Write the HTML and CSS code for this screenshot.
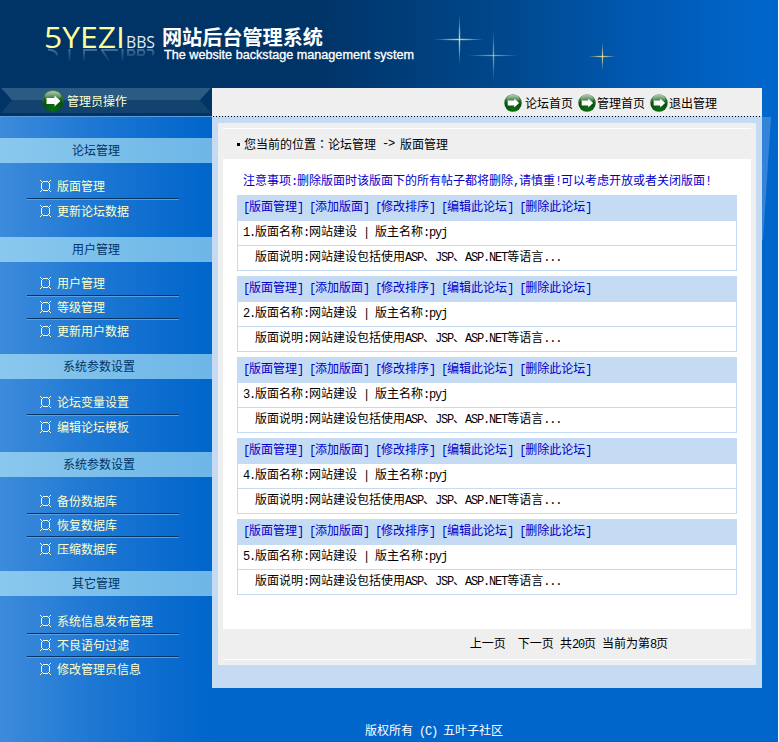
FILE: index.html
```html
<!DOCTYPE html>
<html lang="zh-CN">
<head>
<meta charset="utf-8">
<title>网站后台管理系统</title>
<link rel="stylesheet" href="styles.css">
</head>
<body>
<svg class="defs" width="0" height="0" aria-hidden="true">
  <defs>
    <radialGradient id="ball" cx="50%" cy="85%" r="85%">
      <stop offset="0" stop-color="#0a7012"/><stop offset=".55" stop-color="#06500c"/><stop offset="1" stop-color="#4f9352"/>
    </radialGradient>
    <linearGradient id="shine" x1="0" y1="0" x2="0" y2="1">
      <stop offset="0" stop-color="#fff" stop-opacity=".55"/><stop offset="1" stop-color="#fff" stop-opacity=".05"/>
    </linearGradient>
    <linearGradient id="mirror" gradientUnits="userSpaceOnUse" x1="0" y1="49" x2="0" y2="62">
      <stop offset="0" stop-color="#9fb8c8" stop-opacity=".45"/><stop offset="1" stop-color="#9fb8c8" stop-opacity="0"/>
    </linearGradient>
    <radialGradient id="glow"><stop offset="0" stop-color="#d5dc98"/><stop offset=".4" stop-color="#a9bd94" stop-opacity=".8"/><stop offset="1" stop-color="#7fa5a8" stop-opacity="0"/></radialGradient>
    <symbol id="go" viewBox="0 0 22 22">
      <circle cx="11" cy="11" r="10.7" fill="url(#ball)"/>
      <ellipse cx="11" cy="6.2" rx="8" ry="5.2" fill="url(#shine)"/>
      <path d="M4.500 8h8V5.500L18.500 11l-6 5.500V14h-8z" fill="#fff"/>
    </symbol>
    <symbol id="mark" viewBox="0 0 12 12">
      <path d="M0 .5h1M1 1.500h1M10 .5h1M9 1.500h1M0 11.500h1M1 10.500h1M10 11.500h1M9 10.500h1M3 1.500h5M3 10.500h5M1.500 3v6M9.500 3v6M2 2.500h1M8 2.500h1M2 9.500h1M8 9.500h1" fill="none" stroke="#ffc"/>
    </symbol>
  </defs>
</svg>
<div class="page">
  <header class="banner">
    <svg width="778" height="88" viewBox="0 0 778 88">
      <path d="M48 49.500q9 1 9 6M69.500 49v12M83 50h14M84 50v11M101 50h17M102 50l7 11M122.500 49v12M128 50h5q3 3 0 5h-5zM138 50h5q3 3 0 5h-5zM147 50h5q3 3 0 5" fill="none" stroke="url(#mirror)" stroke-width="2"/>
      <text class="logo" x="44" y="48" textLength="81" lengthAdjust="spacingAndGlyphs">5YEZI</text>
      <text class="logo-sub" x="126" y="48" textLength="29" lengthAdjust="spacingAndGlyphs">BBS</text>
      <text class="title" x="162" y="45" textLength="161" lengthAdjust="spacingAndGlyphs">网站后台管理系统</text>
      <text class="subtitle" x="164" y="59" textLength="250" lengthAdjust="spacingAndGlyphs">The website backstage management system</text>
      <g fill="url(#glow)">
        <ellipse cx="459" cy="39.500" rx="25" ry="1.300"/><ellipse cx="459.500" cy="39.500" rx="1.300" ry="25"/>
        <ellipse cx="493" cy="55.500" rx="25" ry="1.200" opacity=".65"/><ellipse cx="493.500" cy="55.500" rx="1.300" ry="25" opacity=".65"/>
        <ellipse cx="602" cy="56.500" rx="14" ry="1.200"/><ellipse cx="602.500" cy="56.500" rx="1.200" ry="14"/>
      </g>
    </svg>
  </header>
  <div class="columns">
    <nav class="side">
      <div class="side-head">
        <svg class="ribbon" width="212" height="28" viewBox="0 0 212 28">
          <path d="M1 0h210l-11 12H12z" fill="#2b5b82"/>
          <path d="M12 12h188l11 13H1z" fill="#12436f"/>
        </svg>
        <svg class="go-large"><use href="#go"/></svg>
        <span>管理员操作</span>
      </div>
      <h2>论坛管理</h2>
      <ul class="g1"><li><svg><use href="#mark"/></svg>版面管理</li><li><svg><use href="#mark"/></svg>更新论坛数据</li></ul>
      <h2>用户管理</h2>
      <ul class="g2"><li><svg><use href="#mark"/></svg>用户管理</li><li><svg><use href="#mark"/></svg>等级管理</li><li><svg><use href="#mark"/></svg>更新用户数据</li></ul>
      <h2 class="wide">系统参数设置</h2>
      <ul class="g3"><li><svg><use href="#mark"/></svg>论坛变量设置</li><li><svg><use href="#mark"/></svg>编辑论坛模板</li></ul>
      <h2 class="wide">系统参数设置</h2>
      <ul class="g4"><li><svg><use href="#mark"/></svg>备份数据库</li><li><svg><use href="#mark"/></svg>恢复数据库</li><li><svg><use href="#mark"/></svg>压缩数据库</li></ul>
      <h2>其它管理</h2>
      <ul class="g5"><li><svg><use href="#mark"/></svg>系统信息发布管理</li><li><svg><use href="#mark"/></svg>不良语句过滤</li><li><svg><use href="#mark"/></svg>修改管理员信息</li></ul>
    </nav>
    <div class="right">
      <main>
        <div class="toolbar">
          <a class="first"><svg><use href="#go"/></svg>论坛首页</a>
          <a><svg><use href="#go"/></svg>管理首页</a>
          <a><svg><use href="#go"/></svg>退出管理</a>
        </div>
        <section class="panel">
          <div class="crumb"><i></i>您当前的位置<span class="colon" lang="zh-TW">：</span>论坛管理<b> -&gt; </b>版面管理</div>
          <div class="sheet">
            <p class="notice">注意事项<b>:</b>删除版面时该版面下的所有帖子都将删除<b>,</b>请慎重<b>!</b>可以考虑开放或者关闭版面<b>!</b></p>
            <div class="boards">
              <div class="board"><div class="acts"><b>[</b>版面管理<b>] [</b>添加版面<b>] [</b>修改排序<b>] [</b>编辑此论坛<b>] [</b>删除此论坛<b>]</b></div><div><b>1.</b>版面名称<b>:</b>网站建设<b> | </b>版主名称<b>:pyj</b></div><div class="desc">版面说明<b>:</b>网站建设包括使用<b>ASP</b>、<b>JSP</b>、<b>ASP.NET</b>等语言<b>...</b></div></div>
              <div class="board"><div class="acts"><b>[</b>版面管理<b>] [</b>添加版面<b>] [</b>修改排序<b>] [</b>编辑此论坛<b>] [</b>删除此论坛<b>]</b></div><div><b>2.</b>版面名称<b>:</b>网站建设<b> | </b>版主名称<b>:pyj</b></div><div class="desc">版面说明<b>:</b>网站建设包括使用<b>ASP</b>、<b>JSP</b>、<b>ASP.NET</b>等语言<b>...</b></div></div>
              <div class="board"><div class="acts"><b>[</b>版面管理<b>] [</b>添加版面<b>] [</b>修改排序<b>] [</b>编辑此论坛<b>] [</b>删除此论坛<b>]</b></div><div><b>3.</b>版面名称<b>:</b>网站建设<b> | </b>版主名称<b>:pyj</b></div><div class="desc">版面说明<b>:</b>网站建设包括使用<b>ASP</b>、<b>JSP</b>、<b>ASP.NET</b>等语言<b>...</b></div></div>
              <div class="board"><div class="acts"><b>[</b>版面管理<b>] [</b>添加版面<b>] [</b>修改排序<b>] [</b>编辑此论坛<b>] [</b>删除此论坛<b>]</b></div><div><b>4.</b>版面名称<b>:</b>网站建设<b> | </b>版主名称<b>:pyj</b></div><div class="desc">版面说明<b>:</b>网站建设包括使用<b>ASP</b>、<b>JSP</b>、<b>ASP.NET</b>等语言<b>...</b></div></div>
              <div class="board"><div class="acts"><b>[</b>版面管理<b>] [</b>添加版面<b>] [</b>修改排序<b>] [</b>编辑此论坛<b>] [</b>删除此论坛<b>]</b></div><div><b>5.</b>版面名称<b>:</b>网站建设<b> | </b>版主名称<b>:pyj</b></div><div class="desc">版面说明<b>:</b>网站建设包括使用<b>ASP</b>、<b>JSP</b>、<b>ASP.NET</b>等语言<b>...</b></div></div>
            </div>
          </div>
          <div class="pager">上一页<b>  </b>下一页<b> </b>共<b>20</b>页<b> </b>当前为第<b>8</b>页</div>
        </section>
        <svg class="fold" width="9" height="123" viewBox="0 0 9 123"><path d="M0 0h9L1 123H0z" fill="#3384d8"/></svg>
      </main>
      <footer>版权所有<b> (C) </b>五叶子社区</footer>
    </div>
  </div>
</div>
</body>
</html>
```
FILE: styles.css
```css
* { box-sizing: border-box; }
body {
  margin: 0;
  background: #fff;
  color: #000;
  font: 12px/16px "Noto Sans CJK SC", sans-serif;
  overflow: hidden;
}
svg { display: block; }
.defs { position: absolute; }
/* Half-width characters: exactly 6px each beside 12px ideographs. */
b {
  font: 12px/16px "Liberation Mono", monospace;
  letter-spacing: -1.2px;
  white-space: pre;
}
.page { width: 778px; height: 742px; background: #06c; }
.banner { height: 88px; background: linear-gradient(90deg, #036 0, #036 310px, #004a90 520px, #0059b3 640px, #06c 770px); }
.logo { font: 29px "Open Sans", sans-serif; fill: #ff9; }
.logo-sub { font: 16px "Open Sans", sans-serif; fill: #e4ecf4; }
.title { font: bold 20px "Noto Sans CJK SC", sans-serif; fill: #fff; }
.subtitle { font: 12px "Liberation Sans", sans-serif; fill: #fff; stroke: #fff; stroke-width: .3px; }
.columns { display: flex; height: 654px; }

.side {
  width: 212px;
  background: linear-gradient(90deg, #3d8bdb, #1d77d3 45%, #0a6bce 80%, #06c);
  color: #ffc;
}
.side-head {
  position: relative;
  display: flex;
  align-items: center;
  gap: 3px;
  height: 29px;
  padding: 0 0 2px 42px;
  background: #036;
  border-bottom: 1px solid #5b9bdc;
  margin-bottom: 21px;
}
.ribbon { position: absolute; left: 0; top: 0; }
.side-head span, .go-large { position: relative; }
.go-large { width: 22px; height: 22px; }
h2 {
  margin: 0;
  height: 25px;
  padding-left: 72px;
  font-size: 12px;
  font-weight: 400;
  line-height: 23px;
  color: #036;
  background: linear-gradient(90deg, #8ac8ee, #6db6e7);
}
h2.wide { padding-left: 63px; }
ul { margin: 0; padding: 0 0 0 27px; list-style: none; }
.g1 { height: 74px; padding-top: 13px; }
.g2 { height: 92px; padding-top: 11px; }
.g3 { height: 73px; padding-top: 13px; }
.g4 { height: 94px; padding-top: 14px; }
.g5 { padding-top: 15px; }
li {
  display: flex;
  align-items: center;
  gap: 5px;
  width: 152px;
  height: 23px;
  padding: 0 0 2px 13px;
  white-space: nowrap;
  border-bottom: 1px solid #5b9fe0;
  box-shadow: inset 0 -1px #036;
}
li:first-child { height: 24px; padding-bottom: 3px; }
li:last-child { height: 22px; padding-bottom: 0; border: 0; box-shadow: none; }
li svg { width: 12px; height: 12px; }

.right { width: 566px; }
main { position: relative; width: 550px; height: 600px; background: #c5dbf3; }
.toolbar {
  display: flex;
  justify-content: flex-end;
  gap: 5px;
  height: 29px;
  padding: 6px 45px 0 0;
  background: repeating-linear-gradient(90deg, #c5dbf3 0 1px, #000 1px 2px, #c5dbf3 2px 3px) 0 100% / 100% 1px no-repeat #efefef;
}
.toolbar a { display: flex; align-items: center; height: 18px; }
.toolbar svg { width: 18px; height: 18px; margin-right: 1px; }
.toolbar .first svg { margin-right: 3px; }
.panel { height: 542px; margin: 6px 6px 0; padding: 5px; background: #efefef; }
.crumb {
  display: flex;
  align-items: center;
  height: 31px;
  padding-left: 14px;
  border-top: 1px solid #fff;
}
.crumb i { width: 3px; height: 3px; margin-right: 4px; background: #000; }
.colon { font-family: "Noto Sans CJK TC", sans-serif; }
.sheet { height: 470px; padding: 13px 14px; background: #fff; }
.notice { margin: 0; padding-left: 6px; height: 23px; color: #00c; }
.boards { display: grid; gap: 5px; }
.board { width: 500px; height: 76px; border: solid #c5dbf3; border-width: 0 1px 1px; }
.board div { height: 24px; line-height: 20px; padding-left: 5px; white-space: nowrap; }
.board .acts { height: 26px; line-height: 22px; padding-left: 5px; background: #c5dbf3; color: #00c; }
.board .desc { height: 25px; line-height: 20px; padding-left: 17px; border-top: 1px solid #c5dbf3; }
.pager { height: 31px; padding: 6px 83px 0 0; text-align: right; border-bottom: 1px solid #fff; }
.fold { position: absolute; left: 550px; top: 29px; }
footer { padding: 34px 0 0 153px; color: #fff; }
```
